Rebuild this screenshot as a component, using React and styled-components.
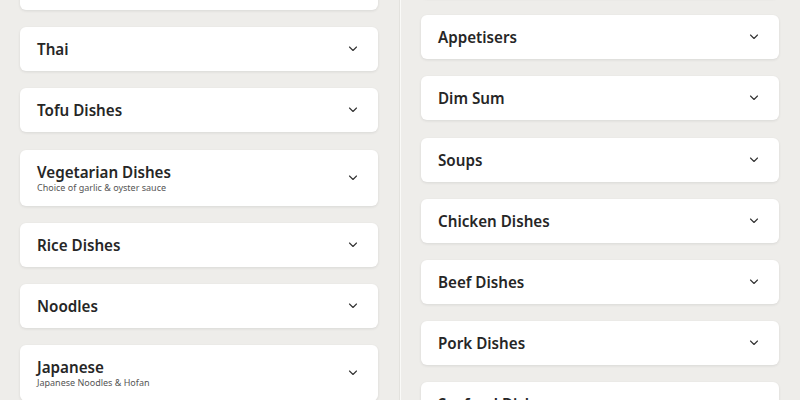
import React from 'react';
import styled, { createGlobalStyle } from 'styled-components';

const leftMenu = [
  { title: 'Chinese Specials' },
  { title: 'Thai' },
  { title: 'Tofu Dishes' },
  { title: 'Vegetarian Dishes', note: 'Choice of garlic & oyster sauce' },
  { title: 'Rice Dishes' },
  { title: 'Noodles' },
  { title: 'Japanese', note: 'Japanese Noodles & Hofan' },
];

const rightMenu = [
  { title: 'Specials' },
  { title: 'Appetisers' },
  { title: 'Dim Sum' },
  { title: 'Soups' },
  { title: 'Chicken Dishes' },
  { title: 'Beef Dishes' },
  { title: 'Pork Dishes' },
  { title: 'Seafood Dishes' },
];

const Chevron = () => (
  <svg width="10" height="6" viewBox="0 0 10 6" fill="none">
    <path d="M1.5 1 L5 4.5 L8.5 1" stroke="#333" strokeWidth="1.1" strokeLinecap="round" strokeLinejoin="round" />
  </svg>
);

const Category = ({ title, note }) => (
  <Card tall={note ? 1 : 0}>
    <Heading>
      <Title>{title}</Title>
      {note && <Note>{note}</Note>}
    </Heading>
    <Chevron />
  </Card>
);

export default function App() {
  return (
    <>
      <GlobalStyle />
      <Page>
        <Column>
          <List offset={-34}>
            {leftMenu.map(c => <Category key={c.title} {...c} />)}
          </List>
        </Column>
        <Divider />
        <Column>
          <List offset={-46}>
            {rightMenu.map(c => <Category key={c.title} {...c} />)}
          </List>
        </Column>
      </Page>
    </>
  );
}

const GlobalStyle = createGlobalStyle`
  html, body {
    margin: 0;
    padding: 0;
    background: #eeedea;
  }
  body {
    font-family: "Noto Sans", "Open Sans", sans-serif;
  }
`;

const Page = styled.div`
  display: flex;
  width: 800px;
  height: 400px;
  overflow: hidden;
  background: #eeedea;
`;

const Column = styled.div`
  flex: 1;
  overflow: hidden;
  padding: 0 21px 0 20px;
`;

const Divider = styled.div`
  width: 1px;
  flex: none;
  background: #fafaf8;
  border-left: 1px solid #e3e2de;
`;

const List = styled.div`
  display: flex;
  flex-direction: column;
  gap: 17.2px;
  margin-top: ${p => p.offset}px;
`;

const Card = styled.div`
  display: flex;
  align-items: center;
  justify-content: space-between;
  height: ${p => (p.tall ? 56 : 44)}px;
  box-sizing: border-box;
  padding: 0 20px 0 17px;
  background: #fff;
  border-radius: 6px;
  box-shadow: 0 1px 3px rgba(0, 0, 0, 0.09);
  flex: none;
`;

const Heading = styled.div`
  display: flex;
  flex-direction: column;
`;

const Title = styled.div`
  font-size: 15.2px;
  font-weight: 600;
  color: #262626;
  line-height: 20px;
`;

const Note = styled.div`
  font-size: 9px;
  color: #555;
  line-height: 12px;
`;
